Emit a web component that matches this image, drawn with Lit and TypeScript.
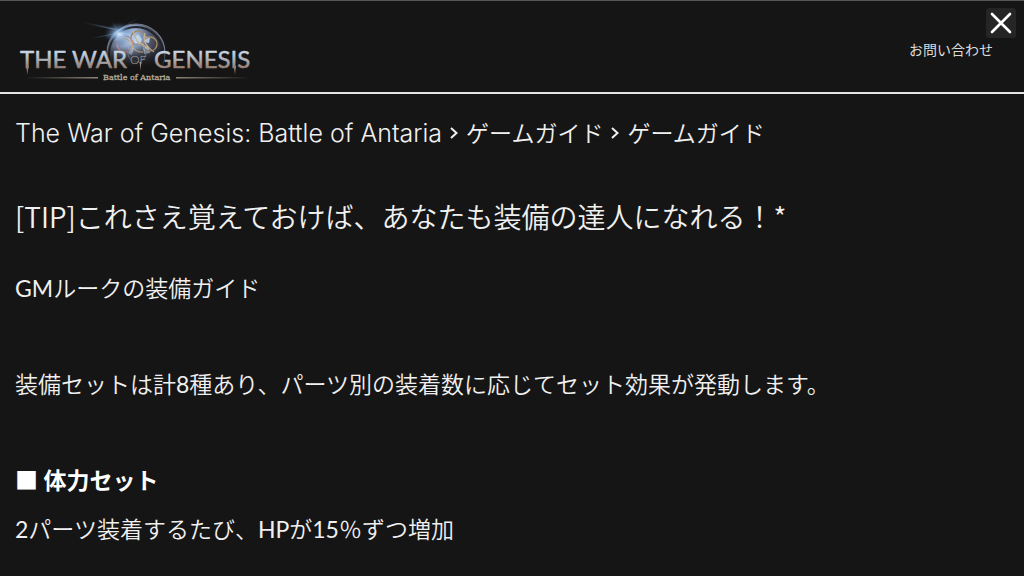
import { LitElement, html, css } from "lit";
import { customElement } from "lit/decorators.js";

@customElement("game-logo")
class GameLogo extends LitElement {
  static styles = css`
    :host {
      display: block;
    }
    .logo {
      display: block;
      width: 240px;
      height: 72px;
    }
    .name {
      font-family: Lato, "Liberation Sans", sans-serif;
      font-size: 24px;
      font-weight: 400;
      stroke-width: 0.5;
    }
    .of {
      font-family: Lato, "Liberation Sans", sans-serif;
      font-size: 12px;
    }
    .sub {
      font-family: "DejaVu Serif", serif;
      font-size: 8px;
      font-weight: 400;
      stroke-width: 0.3;
    }
  `;

  render() {
    return html`
      <svg class="logo" viewBox="16 14 240 72" role="img" aria-label="The War of Genesis: Battle of Antaria">
        <defs>
          <linearGradient id="metal" x1="0" y1="50" x2="0" y2="74" gradientUnits="userSpaceOnUse">
            <stop offset="0" stop-color="#ccdbec" />
            <stop offset="0.35" stop-color="#b1b8c3" />
            <stop offset="0.7" stop-color="#98857c" />
            <stop offset="1" stop-color="#7a5544" />
          </linearGradient>
          <radialGradient id="orb" cx="0.38" cy="0.22" r="0.75">
            <stop offset="0" stop-color="#cfe6ff" />
            <stop offset="0.3" stop-color="#7f93b5" />
            <stop offset="0.5" stop-color="#515566" />
            <stop offset="0.8" stop-color="#25252b" />
            <stop offset="1" stop-color="#17171a" />
          </radialGradient>
          <linearGradient id="fade" x1="0" y1="23" x2="0" y2="76" gradientUnits="userSpaceOnUse">
            <stop offset="0" stop-color="#fff" />
            <stop offset="0.45" stop-color="#fff" />
            <stop offset="0.85" stop-color="#000" />
          </linearGradient>
          <mask id="lower" maskUnits="userSpaceOnUse" x="100" y="20" width="70" height="60">
            <rect x="100" y="20" width="70" height="60" fill="url(#fade)" />
          </mask>
          <radialGradient id="glow">
            <stop offset="0" stop-color="#f0f9ff" />
            <stop offset="0.3" stop-color="#9cc6f5" stop-opacity="0.75" />
            <stop offset="1" stop-color="#24466f" stop-opacity="0" />
          </radialGradient>
          <linearGradient id="left">
            <stop offset="0" stop-color="#8d8578" stop-opacity="0" />
            <stop offset="1" stop-color="#8d8578" />
          </linearGradient>
          <linearGradient id="right">
            <stop offset="0" stop-color="#8d8578" />
            <stop offset="1" stop-color="#8d8578" stop-opacity="0" />
          </linearGradient>
          <filter id="soft" x="-20%" y="-20%" width="140%" height="140%">
            <feGaussianBlur stdDeviation="0.5" />
          </filter>
        </defs>

        <g mask="url(#lower)">
          <circle cx="136" cy="53" r="29" fill="url(#orb)" stroke="#737987" stroke-width="1.2" />
          <circle cx="136" cy="54" r="27" fill="none" stroke="#22242b" stroke-width="2" />
          <g fill="#c8e2fa" opacity="0.75" filter="url(#soft)">
            <path d="M134 39L138 34L142 39L140 46L135 45ZM124 36L130 33L131 39L126 41ZM145 36L150 38L149 43L144 42Z" />
            <path d="M129 47L134 48L132 55L127 53ZM143 47L149 47L150 53L144 54Z" />
          </g>
          <g fill="none" filter="url(#soft)" stroke-width="1.3">
            <circle cx="138" cy="38" r="7" stroke="#a08a6c" />
            <circle cx="125" cy="44" r="8" stroke="#c98f8c" />
            <circle cx="150" cy="44" r="7" stroke="#a8906c" />
            <circle cx="137" cy="53" r="9" stroke="#8a96ab" />
            <path d="M116 40Q127 35 131 44T143 52M133 32L137 41L148 48M145 33Q141 43 154 52" stroke="#c9b392" />
          </g>
        </g>
        <ellipse cx="119" cy="34" rx="15" ry="12" fill="url(#glow)" />
        <g fill="url(#glow)" opacity="0.3" filter="url(#soft)">
          <ellipse cx="109" cy="30" rx="31" ry="1.8" transform="rotate(12 118 33)" />
          <ellipse cx="112" cy="33" rx="24" ry="1.5" transform="rotate(-12 118 33)" />
          <ellipse cx="122" cy="31" rx="24" ry="1.6" transform="rotate(-32 118 33)" />
          <ellipse cx="118" cy="33" rx="17" ry="1.2" transform="rotate(65 118 33)" />
        </g>

        <g class="name" fill="url(#metal)" stroke="url(#metal)">
          <text x="20" y="68">THE</text>
          <text x="72" y="68">WAR</text>
          <text x="154" y="68">GENESIS</text>
        </g>
        <text class="of" x="130" y="64" fill="#a3a2a5">OF</text>
        <path d="M26 66H28.500L27.500 75ZM233.500 66H236L235 75ZM139.500 62H141V71Z" fill="url(#metal)" />

        <rect x="25" y="77" width="73" height="1.5" fill="url(#left)" />
        <rect x="176" y="77" width="74" height="1.5" fill="url(#right)" />
        <text class="sub" x="103" y="80" fill="#b5ae9c" stroke="#b5ae9c">Battle of Antaria</text>
      </svg>
    `;
  }
}

@customElement("app-root")
class AppRoot extends LitElement {
  static styles = css`
    :host {
      display: block;
      box-sizing: border-box;
      min-height: 100vh;
      background: #151515;
      color: #f0f0f0;
      font-family: Lato, "Noto Sans CJK JP", sans-serif;
      font-size: 23px;
      line-height: 32px;
      font-weight: 350;
    }
    .header {
      display: flex;
      justify-content: space-between;
      align-items: flex-start;
      padding: 13px 31px 6px 16px;
      border-top: 1px solid #555;
      border-bottom: 2px solid #e4e4e4;
    }
    .contact {
      margin-top: 25px;
      color: #dcdcdc;
      font-family: "Noto Sans CJK JP", sans-serif;
      font-size: 14px;
      line-height: 20px;
      font-weight: 400;
      text-decoration: none;
    }
    .close {
      position: absolute;
      top: 8px;
      right: 8px;
      display: grid;
      place-items: center;
      width: 30px;
      height: 30px;
      padding: 0;
      border: 0;
      border-radius: 3px;
      background: #252525;
      cursor: pointer;
    }
    .close svg {
      width: 22px;
      height: 22px;
      fill: none;
      stroke: #fff;
      stroke-width: 2.6;
      stroke-linecap: round;
    }
    .main {
      padding: 22px 15px 0;
    }
    .crumbs {
      display: flex;
      align-items: baseline;
      gap: 8px;
      font-family: "Noto Sans CJK JP", sans-serif;
    }
    .crumbs a {
      color: inherit;
      text-decoration: none;
    }
    .crumbs .home {
      font-family: Inter, sans-serif;
      font-size: 25px;
      font-weight: 300;
    }
    .crumbs svg {
      align-self: center;
      width: 8px;
      height: 14px;
      fill: none;
      stroke: currentColor;
      stroke-width: 2;
    }
    h1 {
      margin: 47px 0 0;
      font-family: "Noto Sans CJK JP", sans-serif;
      font-size: 28px;
      line-height: 40px;
      font-weight: 350;
    }
    p {
      margin: 64px 0 0;
    }
    .latin {
      font-weight: 400;
    }
    .lead {
      margin-top: 36px;
    }
    h2 {
      margin: 64px 0 0;
      color: #fff;
      font-size: 23px;
      line-height: 32px;
      font-weight: 700;
    }
    h2 + p {
      margin-top: 17px;
    }
  `;

  render() {
    const arrow = html`<svg viewBox="0 0 8 14" aria-hidden="true"><path d="M1 2L6.500 7L1 12" /></svg>`;
    return html`
      <header class="header">
        <game-logo></game-logo>
        <a class="contact" href="#contact">お問い合わせ</a>
      </header>
      <button class="close" type="button" aria-label="閉じる">
        <svg viewBox="0 0 22 22" aria-hidden="true"><path d="M2 2L20 20M20 2L2 20" /></svg>
      </button>
      <main class="main">
        <nav class="crumbs">
          <a class="home" href="#home">The War of Genesis: Battle of Antaria</a>${arrow}
          <a href="#guide">ゲームガイド</a>${arrow}
          <a href="#guide-list">ゲームガイド</a>
        </nav>
        <h1>[TIP]これさえ覚えておけば、あなたも装備の達人になれる！*</h1>
        <p class="lead"><span class="latin">GM</span>ルークの装備ガイド</p>
        <p>装備セットは計<span class="latin">8</span>種あり、パーツ別の装着数に応じてセット効果が発動します。</p>
        <h2>■ 体力セット</h2>
        <p><span class="latin">2</span>パーツ装着するたび、<span class="latin">HP</span>が<span class="latin">15</span>％ずつ増加</p>
      </main>
    `;
  }
}
